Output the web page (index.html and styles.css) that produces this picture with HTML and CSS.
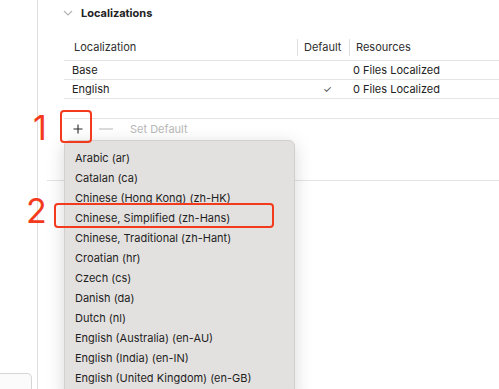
FILE: index.html
```html
<!DOCTYPE html>
<html lang="en">
<head>
    <meta charset="UTF-8">
    <meta name="viewport" content="width=device-width, initial-scale=1.0">
    <title>Localizations</title>
    <link rel="stylesheet" href="styles.css">
</head>
<body>
    <div class="window">
        <div class="sidebar">
            <div class="sidebar-field"></div>
        </div>

        <div class="main">
            <div class="section-head">
                <svg class="chevron" width="10" height="6" viewBox="0 0 10 6">
                    <path d="M1 1 L5 5 L9 1" fill="none" stroke="#b5b5b5" stroke-width="1.2"/>
                </svg>
                <span>Localizations</span>
            </div>

            <div class="table">
                <div class="row head">
                    <div class="cell">Localization</div>
                    <div class="cell sep">Default</div>
                    <div class="cell sep">Resources</div>
                </div>
                <div class="row">
                    <div class="cell">Base</div>
                    <div class="cell check"></div>
                    <div class="cell res">0 Files Localized</div>
                </div>
                <div class="row">
                    <div class="cell">English</div>
                    <div class="cell check">✓</div>
                    <div class="cell res">0 Files Localized</div>
                </div>
            </div>

            <div class="toolbar">
                <button class="tool add">
                    <svg width="10" height="10" viewBox="0 0 10 10">
                        <path d="M5 0.5 V9.5 M0.5 5 H9.5" stroke="#2a2a2a" stroke-width="1.1"/>
                    </svg>
                </button>
                <button class="tool remove">
                    <svg width="14" height="2" viewBox="0 0 14 2">
                        <path d="M0 1 H14" stroke="#c4c4c4" stroke-width="1.2"/>
                    </svg>
                </button>
                <span class="set-default">Set Default</span>
            </div>

            <div class="divider"></div>
        </div>

        <!-- popup opened from the + button -->
        <ul class="menu">
            <li>Arabic (ar)</li>
            <li>Catalan (ca)</li>
            <li>Chinese (Hong Kong) (zh-HK)</li>
            <li>Chinese, Simplified (zh-Hans)</li>
            <li>Chinese, Traditional (zh-Hant)</li>
            <li>Croatian (hr)</li>
            <li>Czech (cs)</li>
            <li>Danish (da)</li>
            <li>Dutch (nl)</li>
            <li>English (Australia) (en-AU)</li>
            <li>English (India) (en-IN)</li>
            <li>English (United Kingdom) (en-GB)</li>
        </ul>

        <!-- annotations -->
        <div class="mark mark-1">1</div>
        <div class="ring ring-1"></div>
        <div class="mark mark-2">2</div>
        <div class="ring ring-2"></div>
    </div>
</body>
</html>
```

FILE: styles.css
```css
* {
    box-sizing: border-box;
}
body {
    margin: 0;
    font-family: Inter, "Liberation Sans", sans-serif;
    font-size: 11px;
    color: #222;
    background: #fff;
}
.window {
    position: relative;
    width: 499px;
    height: 389px;
    overflow: hidden;
    display: flex;
}
.sidebar {
    width: 38px;
    flex-shrink: 0;
    border-right: 1px solid #dedede;
    display: flex;
    flex-direction: column;
    justify-content: flex-end;
}
.sidebar-field {
    width: 33px;
    height: 16px;
    margin-left: -1px;
    border: 1px solid #d6d6d6;
    border-bottom: none;
    border-radius: 0 5px 0 0;
    background: #fbfbfb;
}
.main {
    flex: 1;
    padding-left: 26px;
    display: flex;
    flex-direction: column;
}
.section-head {
    height: 26px;
    display: flex;
    align-items: center;
    font-weight: bold;
    color: #222;
}
.chevron {
    margin: 0 8px 0 -1px;
}
.table {
    margin-top: 13px;
}
.row {
    display: grid;
    grid-template-columns: 233px 52px 1fr;
    height: 19px;
    border-bottom: 1px solid #e4e4e4;
    line-height: 18px;
}
.row.head {
    height: 22px;
    line-height: 17px;
    color: #2e2e2e;
}
.row.head .cell:first-child {
    padding-left: 10px;
}
.cell {
    padding-left: 8px;
    white-space: nowrap;
}
.cell.sep {
    border-left: 1px solid #e0e0e0;
    height: 17px;
    padding-left: 6px;
}
.cell.check {
    padding-left: 26px;
    font-size: 10px;
    color: #444;
}
.cell.res {
    padding-left: 4px;
}
.toolbar {
    margin-top: 19px;
    height: 20px;
    border-top: 1px solid #e4e4e4;
    display: flex;
    align-items: center;
}
.tool {
    border: none;
    background: none;
    padding: 0;
    display: flex;
    align-items: center;
}
.add {
    margin-left: 9px;
}
.remove {
    margin-left: 16px;
}
.set-default {
    margin-left: 17px;
    color: #b7b7b7;
}
.divider {
    margin-top: 42px;
    margin-left: -17px;
    border-top: 1px solid #e4e4e4;
}
.menu {
    position: absolute;
    left: 64px;
    top: 140px;
    width: 231px;
    height: 260px;
    margin: 0;
    padding: 7px 0 0;
    list-style: none;
    background: #e3e1df;
    border: 1px solid #d2d0ce;
    border-radius: 6px;
    box-shadow: 0 4px 18px rgba(0, 0, 0, 0.16);
}
.menu li {
    height: 20px;
    line-height: 20px;
    padding-left: 10px;
    color: #1e1e1e;
    white-space: nowrap;
}
.mark {
    position: absolute;
    font-family: Inter, sans-serif;
    font-weight: 400;
    font-size: 34px;
    line-height: 34px;
    color: #f33a1d;
}
.mark-1 {
    left: 33px;
    top: 111px;
}
.mark-2 {
    left: 26px;
    top: 194px;
}
.ring {
    position: absolute;
    border: 2px solid #f33a1d;
    border-radius: 4px;
}
.ring-1 {
    left: 60px;
    top: 110px;
    width: 32px;
    height: 33px;
}
.ring-2 {
    left: 54px;
    top: 203px;
    width: 220px;
    height: 25px;
}
```
